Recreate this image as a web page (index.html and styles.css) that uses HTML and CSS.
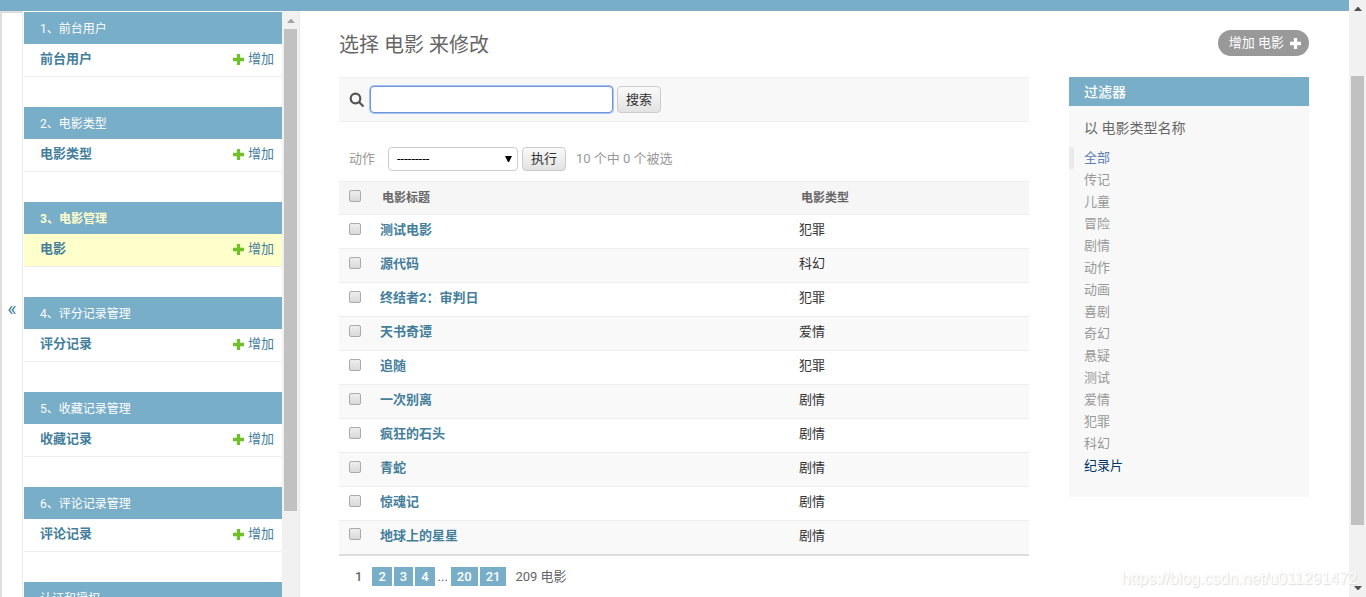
FILE: index.html
```
<!DOCTYPE html>
<html lang="zh-CN">
<head>
<meta charset="utf-8">
<title>选择 电影 来修改</title>
<link rel="stylesheet" href="styles.css">
</head>
<body>
<svg class="defs" aria-hidden="true">
  <symbol id="plus" viewBox="0 0 10 10"><path d="M3.500 0h3v3.500H10v3H6.500V10h-3V6.500H0v-3h3.500z"/></symbol>
</svg>
<div class="page">
  <header class="topbar"></header>
  <div class="shell">
    <button class="toggle" aria-label="切换导航">«</button>
    <nav class="sidebar">
      <section class="module"><h2><a href="#">1、前台用户</a></h2><div class="model"><a class="name" href="#">前台用户</a><a class="add" href="#"><svg><use href="#plus"/></svg>增加</a></div></section>
      <section class="module"><h2><a href="#">2、电影类型</a></h2><div class="model"><a class="name" href="#">电影类型</a><a class="add" href="#"><svg><use href="#plus"/></svg>增加</a></div></section>
      <section class="module current"><h2><a href="#">3、电影管理</a></h2><div class="model"><a class="name" href="#">电影</a><a class="add" href="#"><svg><use href="#plus"/></svg>增加</a></div></section>
      <section class="module"><h2><a href="#">4、评分记录管理</a></h2><div class="model"><a class="name" href="#">评分记录</a><a class="add" href="#"><svg><use href="#plus"/></svg>增加</a></div></section>
      <section class="module"><h2><a href="#">5、收藏记录管理</a></h2><div class="model"><a class="name" href="#">收藏记录</a><a class="add" href="#"><svg><use href="#plus"/></svg>增加</a></div></section>
      <section class="module"><h2><a href="#">6、评论记录管理</a></h2><div class="model"><a class="name" href="#">评论记录</a><a class="add" href="#"><svg><use href="#plus"/></svg>增加</a></div></section>
      <section class="module"><h2><a href="#">认证和授权</a></h2></section>
    </nav>
    <div class="scrollbar side-scroll">
      <svg class="arrow" viewBox="0 0 17 17"><path d="M5 11l3.500-4h1L13 11z"/></svg>
      <div class="thumb"></div>
      <div class="rest"></div>
    </div>
    <main class="content">
      <div class="title-row">
        <h1>选择 电影 来修改</h1>
        <a class="add-button" href="#">增加 电影<svg><use href="#plus"/></svg></a>
      </div>
      <div class="columns">
        <div class="changelist">
          <form class="search">
            <label for="searchbar"><svg viewBox="0 0 16 16" role="img" aria-label="搜索"><circle cx="6.500" cy="6.500" r="4.800"/><path d="M10 10l4.500 4.500"/></svg></label>
            <input id="searchbar" type="text">
            <button class="button" type="button">搜索</button>
          </form>
          <form class="actions">
            <label for="action">动作</label>
            <span class="select"><select id="action"><option>---------</option></select><svg viewBox="0 0 8 8"><path d="M0 1h7L4 7H3z"/></svg></span>
            <button class="button" type="button">执行</button>
            <span class="counter">10 个中 0 个被选</span>
          </form>
          <table class="results">
            <thead><tr><th class="check"><input type="checkbox" aria-label="全选"></th><th class="movie">电影标题</th><th>电影类型</th></tr></thead>
            <tbody>
              <tr><td><input type="checkbox" aria-label="测试电影"></td><th><a href="#">测试电影</a></th><td>犯罪</td></tr>
              <tr><td><input type="checkbox" aria-label="源代码"></td><th><a href="#">源代码</a></th><td>科幻</td></tr>
              <tr><td><input type="checkbox" aria-label="终结者2：审判日"></td><th><a href="#">终结者2：审判日</a></th><td>犯罪</td></tr>
              <tr><td><input type="checkbox" aria-label="天书奇谭"></td><th><a href="#">天书奇谭</a></th><td>爱情</td></tr>
              <tr><td><input type="checkbox" aria-label="追随"></td><th><a href="#">追随</a></th><td>犯罪</td></tr>
              <tr><td><input type="checkbox" aria-label="一次别离"></td><th><a href="#">一次别离</a></th><td>剧情</td></tr>
              <tr><td><input type="checkbox" aria-label="疯狂的石头"></td><th><a href="#">疯狂的石头</a></th><td>剧情</td></tr>
              <tr><td><input type="checkbox" aria-label="青蛇"></td><th><a href="#">青蛇</a></th><td>剧情</td></tr>
              <tr><td><input type="checkbox" aria-label="惊魂记"></td><th><a href="#">惊魂记</a></th><td>剧情</td></tr>
              <tr><td><input type="checkbox" aria-label="地球上的星星"></td><th><a href="#">地球上的星星</a></th><td>剧情</td></tr>
            </tbody>
          </table>
          <div class="paginator"><b>1</b><a href="#">2</a><a href="#">3</a><a href="#">4</a><span class="dots">...</span><a href="#">20</a><a href="#">21</a><span class="total">209 电影</span></div>
        </div>
        <aside class="filter">
          <h2>过滤器</h2>
          <h3>以 电影类型名称</h3>
          <ul>
            <li class="selected"><a href="#">全部</a></li>
            <li><a href="#">传记</a></li>
            <li><a href="#">儿童</a></li>
            <li><a href="#">冒险</a></li>
            <li><a href="#">剧情</a></li>
            <li><a href="#">动作</a></li>
            <li><a href="#">动画</a></li>
            <li><a href="#">喜剧</a></li>
            <li><a href="#">奇幻</a></li>
            <li><a href="#">悬疑</a></li>
            <li><a href="#">测试</a></li>
            <li><a href="#">爱情</a></li>
            <li><a href="#">犯罪</a></li>
            <li><a href="#">科幻</a></li>
            <li class="hovered"><a href="#">纪录片</a></li>
          </ul>
        </aside>
      </div>
    </main>
  </div>
</div>
<div class="scrollbar page-scroll">
  <svg class="arrow" viewBox="0 0 17 17"><path d="M5 11l3.500-4h1L13 11z"/></svg>
  <div class="lead"></div>
  <div class="thumb"></div>
  <div class="rest"></div>
  <svg class="arrow" viewBox="0 0 17 17"><path d="M5 6l3.500 4h1L13 6z"/></svg>
</div>
<div class="watermark">https://blog.csdn.net/u011291472</div>
</body>
</html>
```
FILE: styles.css
```
* { box-sizing: border-box; }
body {
  margin: 0;
  height: 100vh;
  display: flex;
  overflow: hidden;
  background: #fff;
  color: #333;
  font: 13px/20px Roboto, "Noto Sans CJK SC", sans-serif;
}
a { color: #447e9b; text-decoration: none; }
h1, h2, h3, ul { margin: 0; padding: 0; font-weight: 400; }
button, input, select { font: inherit; margin: 0; }
.defs { position: absolute; width: 0; height: 0; }
.page { flex: 1; min-width: 0; display: flex; flex-direction: column; }
.topbar { flex: none; height: 11px; background: #79aec8; }
.shell { flex: 1; min-height: 0; display: flex; }

.toggle {
  flex: none;
  width: 23px;
  padding: 8px 0 0;
  border: 0 solid #ddd;
  border-width: 2px 1px 0 2px;
  border-right-color: #eaeaea;
  background: #fff;
  color: #447e9b;
  font-size: 20px;
}
.sidebar { flex: none; width: 259px; padding: 1px 0 0 1px; overflow: hidden; }
.module { margin-bottom: 30px; }
.module h2 { padding: 2px 16px 0; background: #79aec8; font-size: 12px; line-height: 30px; }
.module h2 a { color: #fff; }
.model {
  display: flex;
  justify-content: space-between;
  padding: 0 8px 2px 16px;
  border-bottom: 1px solid #eee;
  line-height: 30px;
}
.name { font-weight: 700; }
.add { display: flex; align-items: center; gap: 4px; }
.add svg { width: 11px; height: 11px; fill: #70bf2b; }
.current h2 a { color: #ffc; font-weight: 700; }
.current .model { background: #ffc; }

.scrollbar { flex: none; width: 17px; display: flex; flex-direction: column; background: #f1f1f1; }
.arrow { flex: none; width: 17px; height: 17px; fill: #505050; }
.thumb { margin: 0 2px; background: #c1c1c1; }
.side-scroll { width: 18px; padding-top: 1px; border-right: 1px solid #eaeaea; }
.side-scroll .arrow { fill: #a3a3a3; }
.side-scroll .thumb { flex: 482; }
.side-scroll .rest { flex: 86; }
.page-scroll .lead { flex: 59; }
.page-scroll .thumb { flex: 449; }
.page-scroll .rest { flex: 55; }

.content { flex: 1; min-width: 0; padding: 19px 40px 0 39px; }
.title-row { display: flex; justify-content: space-between; align-items: flex-start; height: 47px; }
h1 { padding-top: 1px; color: #666; font-size: 20px; line-height: 28px; }
.add-button {
  display: flex;
  align-items: center;
  gap: 6px;
  height: 26px;
  padding: 0 8px 0 11px;
  border-radius: 13px;
  background: #999;
  color: #fff;
}
.add-button svg { width: 11px; height: 11px; fill: #fff; }
.columns { display: flex; align-items: flex-start; gap: 40px; }
.changelist { flex: 1; min-width: 0; }

.search {
  display: flex;
  align-items: center;
  gap: 4px;
  height: 45px;
  padding: 0 10px;
  border: solid #eee;
  border-width: 1px 0;
  background: #f8f8f8;
}
.search label { display: flex; width: 17px; }
.search svg { width: 16px; height: 16px; fill: none; stroke: #555; stroke-width: 2.200; }
.search input {
  width: 243px;
  height: 27px;
  padding: 0 6px;
  border: 1px solid #6f94d8;
  border-radius: 4px;
  background: #fff;
  outline: none;
  box-shadow: 0 0 0 1px #a5c4f5;
}
.button {
  height: 27px;
  padding: 0 8px;
  border: 1px solid #ccc;
  border-radius: 4px;
  background: linear-gradient(#fafafa, #e2e2e2);
  color: #333;
}
.actions { display: flex; align-items: center; gap: 4px; height: 59px; padding: 14px 10px 0; color: #999; }
.actions label { margin-right: 9px; }
.actions .button { height: 24px; }
.select { position: relative; display: flex; }
.select select {
  width: 130px;
  height: 24px;
  padding: 0 8px;
  border: 1px solid #ccc;
  border-radius: 4px;
  background: #fff;
  color: #000;
  appearance: none;
}
.select svg { position: absolute; right: 5px; top: 8px; width: 8px; height: 8px; pointer-events: none; }
.counter { margin-left: 6px; }

.results { width: 100%; border-collapse: collapse; table-layout: fixed; border-bottom: 2px solid #ddd; }
.results th, .results td { height: 34px; padding: 0 8px 3px 10px; border-bottom: 1px solid #eee; text-align: left; vertical-align: middle; }
.results tbody tr:nth-child(even) { background: #f9f9f9; }
.results thead tr { background: #f6f6f6; border-top: 1px solid #eee; color: #666; font-size: 12px; }
.results .check { width: 31px; }
.results .movie { width: 419px; }
.results thead th { height: 33px; padding: 0 8px 0 12px; }
.results thead th.check { padding: 0 0 1px 10px; }
.results input {
  display: block;
  width: 12px;
  height: 12px;
  margin-bottom: 3px;
  border: 1px solid #aaa;
  border-radius: 2px;
  background: linear-gradient(#eee, #d9d9d9);
  appearance: none;
}
.paginator { display: flex; align-items: center; gap: 2px; padding: 11px 0 10px 10px; color: #666; }
.paginator b, .paginator a { padding: 0 6px; line-height: 19px; font-weight: 500; }
.paginator b { padding-right: 8px; }
.paginator a { background: #79aec8; color: #fff; }
.dots { padding: 0 1px; }
.total { margin-left: 7px; }

.filter { flex: none; width: 240px; padding-bottom: 20px; background: #f8f8f8; }
.filter h2 { padding: 1px 15px 0; background: #79aec8; color: #fff; font-size: 14px; font-weight: 500; line-height: 28px; }
.filter h3 { padding: 12px 15px 9px; color: #666; font-size: 14px; line-height: 20px; }
.filter ul { list-style: none; }
.filter li { padding-left: 15px; line-height: 22px; }
.filter a { color: #999; }
.filter .selected { padding-left: 10px; border-left: 5px solid #eaeaea; }
.filter .selected a { color: #5b80b2; }
.filter .hovered a { color: #036; }

.watermark {
  position: absolute;
  right: 9px;
  bottom: 8px;
  color: #fff;
  font: 16px/20px "Liberation Sans", sans-serif;
  text-shadow: 1px 1px 1px #ddd, 0 0 1px #e4e4e4;
  pointer-events: none;
}
```
